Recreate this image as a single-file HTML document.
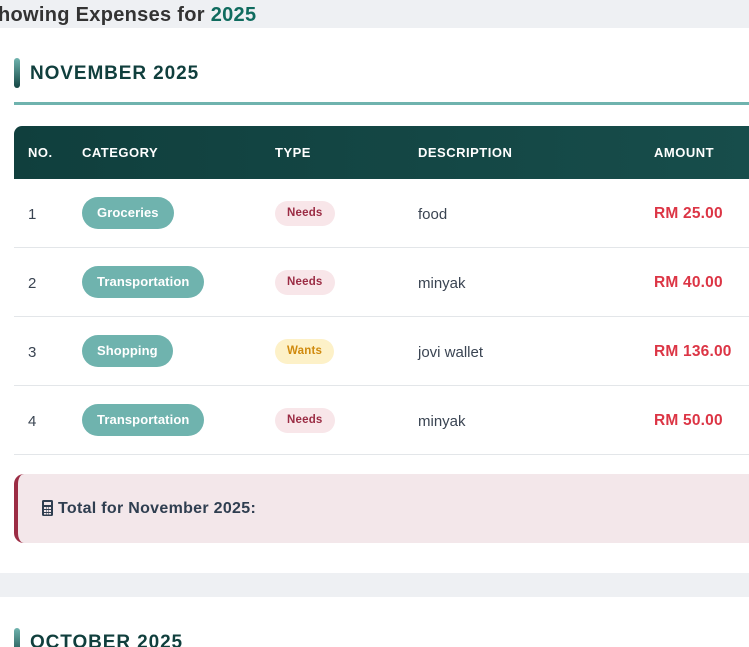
<!DOCTYPE html>
<html><head><style>
*{margin:0;padding:0;box-sizing:border-box}
html,body{width:749px;height:647px;overflow:hidden}
body{background:#eef0f3;font-family:"Liberation Sans",sans-serif;position:relative}
.abs{position:absolute}
.title{left:-2px;top:1px;font-size:20px;font-weight:bold;color:#333;line-height:28px;letter-spacing:0.3px}
.title span{color:#0f6b5e}
.card{left:0;width:749px;background:#fff}
.bar{width:6px;height:30px;border-radius:3px;background:linear-gradient(#6fb3ae,#134543)}
.h{font-size:19px;font-weight:bold;color:#103f3d;letter-spacing:0.9px}
.thead{left:14px;top:126px;width:735px;height:53px;background:linear-gradient(90deg,#103f3d,#174d4b);border-radius:8px 0 0 0;color:#fff;font-size:13px;font-weight:bold;letter-spacing:0.5px}
.thead div{position:absolute;top:19px}
.row{left:14px;width:735px;height:69px;border-bottom:1px solid #e3e6e9;font-size:15px;color:#3a4452}
.row>div{position:absolute}
.cat{left:68px;top:18px;height:32px;line-height:32px;padding:0 15px;border-radius:16px;background:#6fb3ae;color:#fff;font-size:13px;font-weight:bold;letter-spacing:0.1px}
.typ{left:261px;top:22px;height:25px;line-height:25px;padding:0 12px;border-radius:13px;font-size:11.5px;font-weight:bold;letter-spacing:0.2px}
.nd{background:#f8e6e9;color:#9b2c44}
.wt{background:#fdf1c8;color:#d08a0e}
.amt{left:640px;top:26px;color:#dc3545;font-weight:bold;font-size:15.5px;letter-spacing:0.2px}
.t{top:27px}
</style></head><body>
<div class="abs title">howing Expenses for <span>2025</span></div>
<div class="abs card" style="top:28px;height:545px"></div>
<div class="abs bar" style="left:14px;top:58px"></div>
<div class="abs h" style="left:30px;top:63px">NOVEMBER 2025</div>
<div class="abs" style="left:14px;top:102px;width:735px;height:3px;background:#6fb3ae"></div>
<div class="abs thead"><div style="left:14px">NO.</div><div style="left:68px">CATEGORY</div><div style="left:261px">TYPE</div><div style="left:404px">DESCRIPTION</div><div style="left:640px">AMOUNT</div></div>
<div class="abs row" style="top:179px"><div class="t" style="left:14px">1</div><div class="cat">Groceries</div><div class="typ nd">Needs</div><div class="t" style="left:404px">food</div><div class="amt">RM 25.00</div></div>
<div class="abs row" style="top:248px"><div class="t" style="left:14px">2</div><div class="cat">Transportation</div><div class="typ nd">Needs</div><div class="t" style="left:404px">minyak</div><div class="amt">RM 40.00</div></div>
<div class="abs row" style="top:317px"><div class="t" style="left:14px">3</div><div class="cat">Shopping</div><div class="typ wt">Wants</div><div class="t" style="left:404px">jovi wallet</div><div class="amt">RM 136.00</div></div>
<div class="abs row" style="top:386px"><div class="t" style="left:14px">4</div><div class="cat">Transportation</div><div class="typ nd">Needs</div><div class="t" style="left:404px">minyak</div><div class="amt">RM 50.00</div></div>
<div class="abs" style="left:14px;top:474px;width:735px;height:69px;background:#f3e7ea;border-left:4px solid #9b2c44;border-radius:10px 0 0 10px"></div>
<svg class="abs" style="left:42px;top:500px" width="11" height="16" viewBox="0 0 11 16"><rect x="0" y="0" width="11" height="16" rx="1.5" fill="#2f3e50"/><rect x="2" y="2" width="7" height="3" fill="#f3e7ea"/><g fill="#f3e7ea"><rect x="2" y="7" width="2" height="2"/><rect x="4.5" y="7" width="2" height="2"/><rect x="7" y="7" width="2" height="2"/><rect x="2" y="10" width="2" height="2"/><rect x="4.5" y="10" width="2" height="2"/><rect x="7" y="10" width="2" height="2"/><rect x="2" y="13" width="2" height="1.5"/><rect x="4.5" y="13" width="2" height="1.5"/><rect x="7" y="13" width="2" height="1.5"/></g></svg>
<div class="abs" style="left:58px;top:500px;font-size:16px;font-weight:bold;color:#2f3e50;letter-spacing:0.3px">Total for November 2025:</div>
<div class="abs card" style="top:597px;height:60px"></div>
<div class="abs bar" style="left:14px;top:628px"></div>
<div class="abs h" style="left:30px;top:632px">OCTOBER 2025</div>
</body></html>
